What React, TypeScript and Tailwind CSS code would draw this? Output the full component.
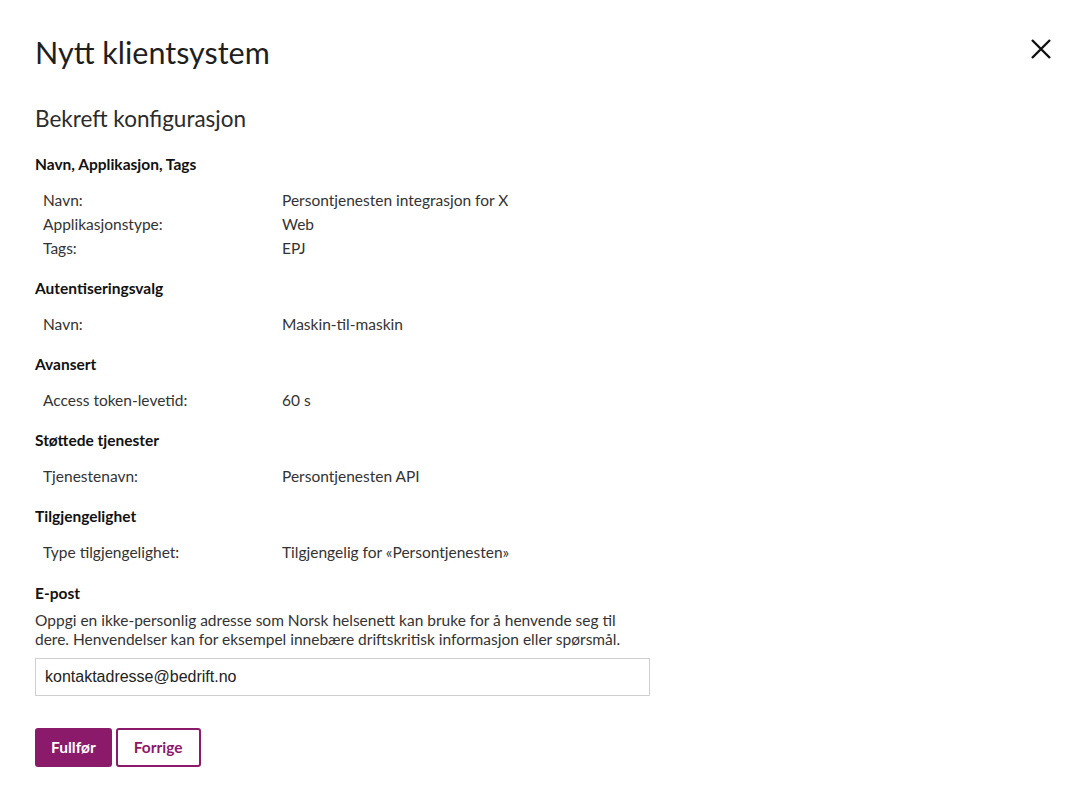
import React from "react";

type Row = { label: string; value: string };
type Section = { title: string; rows: Row[] };

const sections: Section[] = [
  {
    title: "Navn, Applikasjon, Tags",
    rows: [
      { label: "Navn:", value: "Persontjenesten integrasjon for X" },
      { label: "Applikasjonstype:", value: "Web" },
      { label: "Tags:", value: "EPJ" },
    ],
  },
  {
    title: "Autentiseringsvalg",
    rows: [{ label: "Navn:", value: "Maskin-til-maskin" }],
  },
  {
    title: "Avansert",
    rows: [{ label: "Access token-levetid:", value: "60 s" }],
  },
  {
    title: "Støttede tjenester",
    rows: [{ label: "Tjenestenavn:", value: "Persontjenesten API" }],
  },
  {
    title: "Tilgjengelighet",
    rows: [{ label: "Type tilgjengelighet:", value: "Tilgjengelig for «Persontjenesten»" }],
  },
];

const App: React.FC = () => {
  return (
    <div className="min-h-screen bg-white font-['Lato',sans-serif] text-[#1f1f1f]">
      <div className="px-[35px] pt-[30px]">
        <div className="flex items-start justify-between">
          <h1 className="text-[30.5px] leading-[44px] font-normal">Nytt klientsystem</h1>
          <button className="mt-[7px] mr-0 text-[#111]" aria-label="Lukk">
            <svg width="24" height="24" viewBox="0 0 24 24" fill="none" stroke="currentColor" strokeWidth="2.4">
              <path d="M3 3L21 21M21 3L3 21" />
            </svg>
          </button>
        </div>

        <h2 className="mt-[29px] text-[22.5px] leading-[32px] text-[#2b2b2b]">Bekreft konfigurasjon</h2>

        <div className="mt-[17px] flex flex-col gap-[16px]">
          {sections.map((s) => (
            <div key={s.title}>
              <h3 className="text-[15.5px] leading-[24px] font-bold text-[#111]">{s.title}</h3>
              <div className="mt-[12px] pl-[8px]">
                {s.rows.map((r) => (
                  <div key={r.label} className="flex text-[15.5px] leading-[24px] text-[#333]">
                    <span className="w-[239px]">{r.label}</span>
                    <span>{r.value}</span>
                  </div>
                ))}
              </div>
            </div>
          ))}

          <div className="mt-[1px]">
            <h3 className="text-[15.5px] leading-[24px] font-bold text-[#111]">E-post</h3>
            <p className="mt-[6px] w-[615px] text-[15.5px] leading-[19px] text-[#333]">
              Oppgi en ikke-personlig adresse som Norsk helsenett kan bruke for å henvende seg til
              <br />
              dere. Henvendelser kan for eksempel innebære driftskritisk informasjon eller spørsmål.
            </p>
            <input
              className="mt-[9px] h-[38px] w-[615px] border border-[#cfcfcf] px-[9px] font-['Liberation_Sans',Arial,sans-serif] text-[16px] text-[#222] outline-none"
              defaultValue="kontaktadresse@bedrift.no"
            />
            <div className="mt-[32px] flex gap-[4px]">
              <button className="h-[39px] rounded-[3px] bg-[#8b1a6b] px-[16px] text-[15.5px] font-bold text-white">
                Fullfør
              </button>
              <button className="h-[39px] rounded-[3px] border-2 border-[#8b1a6b] bg-white px-[16px] text-[15.5px] font-bold text-[#8b1a6b]">
                Forrige
              </button>
            </div>
          </div>
        </div>
      </div>
    </div>
  );
};

export default App;
